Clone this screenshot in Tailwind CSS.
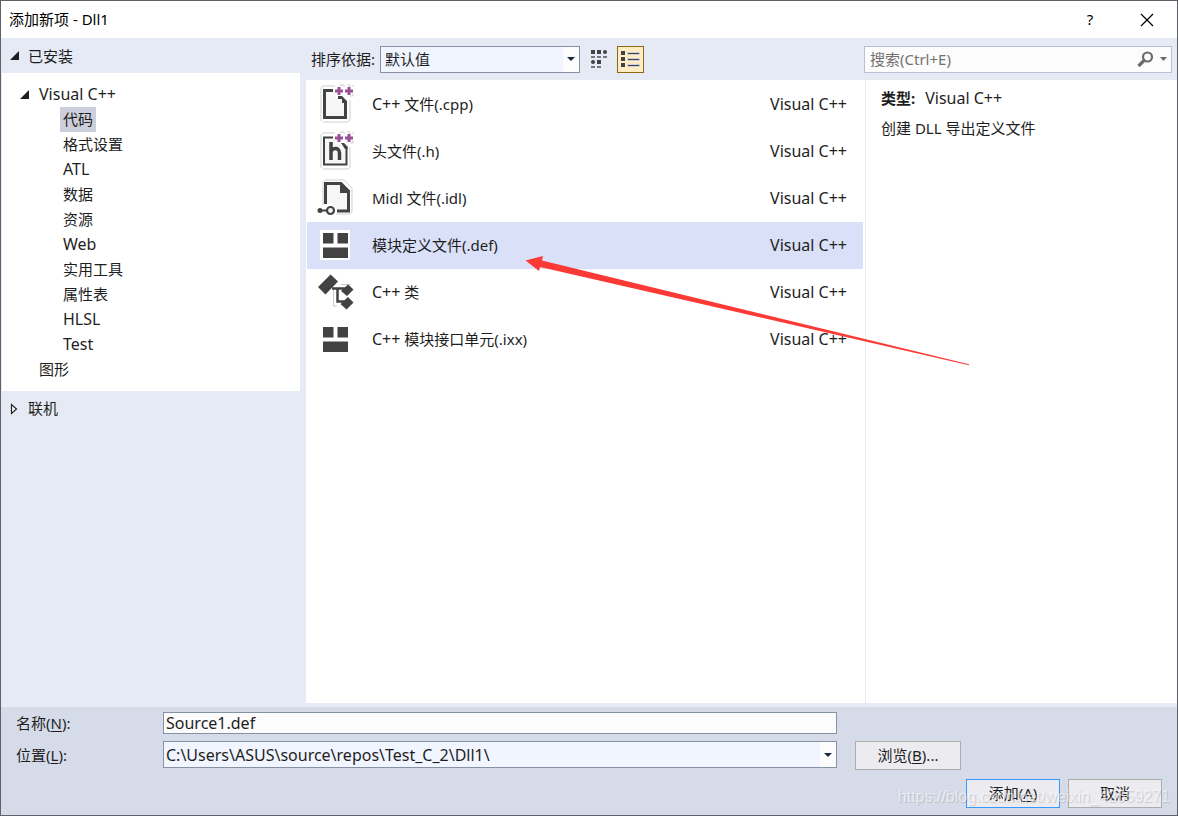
<!DOCTYPE html>
<html lang="zh-CN">
<head>
<meta charset="utf-8">
<title>添加新项 - Dll1</title>
<script src="https://cdn.jsdelivr.net/npm/@tailwindcss/browser@4"></script>
</head>
<body class="relative flex h-screen flex-col overflow-hidden border border-[#5f6068] bg-[#e6eaf5] font-['Noto_Sans','Noto_Sans_CJK_SC',sans-serif] text-[15px] leading-[25px] text-[#1e1e1e]">
<svg class="hidden">
  <symbol id="pluses" viewBox="0 0 40 40">
    <path d="M6 37V4l2-2h12M8 38h25l2-2V16M25 2v-1h4v2M32 1h3v2M37 2h2M38 9v3h-3" fill="none" stroke="#cfcfcf"/>
    <path d="M20 7h8M24 3v8M30 7h8M34 3v8" stroke="#9b4f96" stroke-width="3" fill="none"/>
  </symbol>
  <symbol id="module" viewBox="0 0 40 40">
    <path d="M5 5h30v30H5z" fill="#fff"/>
    <path d="M8 8h10.500v10.500H8zM22.500 8H33v10.500H22.500zM8 22.500h25V33H8z" fill="#424242"/>
  </symbol>
</svg>

<header class="flex h-[37px] shrink-0 items-center bg-white pr-px pl-2 text-black">
  <h1 class="flex-1">添加新项 - Dll1</h1>
  <button class="w-14" aria-label="帮助">?</button>
  <button class="grid h-full w-[58px] place-items-center" aria-label="关闭"><svg width="14" height="14" viewBox="0 0 14 14"><path d="M1 1l12 12M13 1L1 13" stroke="#000" stroke-width="1.200"/></svg></button>
</header>

<main class="flex min-h-0 flex-1">
  <nav class="flex w-[299px] shrink-0 flex-col">
    <button class="flex h-[35px] shrink-0 items-center gap-2 pt-px pl-[9px]"><svg width="10" height="10"><path d="M9 0v9H0z" fill="#1e1e1e"/></svg>已安装</button>
    <ul class="ml-px bg-white pt-[9px] pb-[9px]">
      <li><button class="flex items-center gap-[10px] pl-[18px] text-base leading-[25px]"><svg width="9" height="9"><path d="M9 0v9H0z" fill="#1e1e1e"/></svg>Visual C++</button>
        <ul class="pl-[58px]">
          <li><button class="bg-[#cccedb] px-[3px]">代码</button></li>
          <li><button class="px-[3px]">格式设置</button></li>
          <li><button class="px-[3px] text-base leading-[25px]">ATL</button></li>
          <li><button class="px-[3px]">数据</button></li>
          <li><button class="px-[3px]">资源</button></li>
          <li><button class="px-[3px] text-base leading-[25px]">Web</button></li>
          <li><button class="px-[3px]">实用工具</button></li>
          <li><button class="px-[3px]">属性表</button></li>
          <li><button class="px-[3px] text-base leading-[25px]">HLSL</button></li>
          <li><button class="px-[3px] text-base leading-[25px]">Test</button></li>
        </ul>
      </li>
      <li><button class="pl-[37px]">图形</button></li>
    </ul>
    <button class="flex h-[35px] shrink-0 items-center gap-[10px] pl-[9px]"><svg width="8" height="12"><path d="M1.500 1.500v9L6.500 6z" fill="#fff" stroke="#1e1e1e" stroke-width="1.200"/></svg>联机</button>
  </nav>

  <div class="ml-[6px] flex min-w-0 flex-1 flex-col pb-1">
    <div class="flex h-[42px] shrink-0 items-center pr-[5px] pl-[5px]">
      <label for="sort" class="w-[69px] whitespace-nowrap">排序依据:</label>
      <div class="relative h-[27px] w-[200px]">
        <select id="sort" class="h-full w-full appearance-none border border-[#8591a5] bg-[#f1f5ff] px-1"><option>默认值</option></select>
        <span class="pointer-events-none absolute inset-y-px right-px grid w-4 place-items-center bg-[#fcfcfc]"><svg width="8" height="4"><path d="M0 0h8L4 4z" fill="#1b293e"/></svg></span>
      </div>
      <button class="ml-[5px] grid size-[27px] place-items-center" aria-label="小图标"><svg width="18" height="20" viewBox="0 0 18 20"><g fill="#424242"><path d="M1 1h4v4H1zM7 1h4v4H7zM7 11h4v4H7z"/><circle cx="15" cy="3" r="2"/><circle cx="3" cy="13" r="2"/></g><path d="M1 7h4v2H1zM7 7h4v2H7zM13 7h4v2h-4zM1 17h4v2H1zM7 17h4v2H7z" fill="#77787c"/></svg></button>
      <button class="ml-[5px] grid size-[27px] place-items-center border border-[#8c6a14] bg-[#ffecc4]" aria-label="列表"><svg width="19" height="17" viewBox="0 0 19 17"><path d="M6 1h13v3H6zM6 7h13v3H6zM6 13h13v3H6z" fill="#cdd0da"/><path d="M0 0h4v4H0zM0 6h4v4H0zM0 12h4v4H0zM7 2h11v1H7zM7 8h11v1H7zM7 14h11v1H7z" fill="#424242"/></svg></button>
      <div class="ml-auto flex h-[27px] w-[308px] items-center border border-[#b9c0d6] bg-[#fcfcfc] pr-1 pl-[5px]">
        <input type="text" aria-label="搜索" placeholder="搜索(Ctrl+E)" class="min-w-0 flex-1 outline-none placeholder:text-[#717171]">
        <button aria-label="开始搜索"><svg width="17" height="17" viewBox="0 0 17 17" fill="none" stroke="#6a6a6a"><circle cx="10.500" cy="6" r="4.500" stroke-width="2.200"/><path d="M7 9.500L1.500 15" stroke-width="3.200"/></svg></button>
        <button class="ml-[6px]" aria-label="搜索选项"><svg width="7" height="4"><path d="M0 0h7L3.500 4z" fill="#6a6a6a"/></svg></button>
      </div>
    </div>
    <div class="flex min-h-0 flex-1 bg-white">
      <ul class="min-w-0 flex-1 border-r border-[#e6eaf5] pt-px pr-[2px] pl-px">
        <li class="flex h-[47px] items-center pr-4 pl-2"><svg class="mr-[17px] mb-px" width="40" height="40" viewBox="0 0 40 40"><path d="M9 6h11v7h5l6 5v16H9z" fill="#f6f6f6"/><path d="M18 6.500H9.500v27h21V17.500" fill="none" stroke="#424242" stroke-width="3"/><path d="M23 12h4l5 5v2h-5v-4h-4z" fill="#424242"/><use href="#pluses" width="40" height="40"/></svg><span class="flex-1"><span class="text-base leading-[25px]">C++</span> 文件(.cpp)</span><span class="text-base leading-[25px]">Visual C++</span></li>
        <li class="flex h-[47px] items-center pr-4 pl-2"><svg class="mr-[17px] mb-px" width="40" height="40" viewBox="0 0 40 40"><path d="M9 6h11v7h5l6 5v16H9z" fill="#f6f6f6"/><path d="M18 6.500H9v27h22.500V16" fill="none" stroke="#424242" stroke-width="2"/><path d="M26 12h3l3.500 3.500V18H30z" fill="#424242"/><path d="M16 11v18M16 22c0-5.500 8.500-6.500 8.500 0v7" fill="none" stroke="#424242" stroke-width="3.500"/><use href="#pluses" width="40" height="40"/></svg><span class="flex-1">头文件(.h)</span><span class="text-base leading-[25px]">Visual C++</span></li>
        <li class="flex h-[47px] items-center pr-4 pl-2"><svg class="mr-[17px] mb-px" width="40" height="40" viewBox="0 0 40 40"><path d="M8 27V4l2-2h19l8 8v24l-2 2H21" fill="none" stroke="#cfcfcf"/><path d="M11 5h15l7 7v21H22l-5-7h-6z" fill="#f6f6f6"/><path d="M10.500 26V5.500h15.500l7.500 7.500v20H22" fill="none" stroke="#424242" stroke-width="3"/><path d="M25 4l9 9v2h-9z" fill="#424242"/><path d="M4 32.500h8" stroke="#424242" stroke-width="2"/><circle cx="5" cy="32.500" r="2.500" fill="#424242"/><circle cx="15.500" cy="32.500" r="3.500" fill="#f6f6f6" stroke="#424242" stroke-width="2.200"/></svg><span class="flex-1">Midl 文件(.idl)</span><span class="text-base leading-[25px]">Visual C++</span></li>
        <li class="flex h-[47px] items-center bg-[#dae0f8] pr-4 pl-2"><svg class="mr-[17px] mb-px" width="40" height="40"><use href="#module"/></svg><span class="flex-1">模块定义文件(.def)</span><span class="text-base leading-[25px]">Visual C++</span></li>
        <li class="flex h-[47px] items-center pr-4 pl-2"><svg class="mr-[17px] mb-px" width="40" height="40" viewBox="0 0 40 40"><path d="M18.500 16v18H22M26 12.500h9v3" stroke="#c9c9c9" fill="none"/><path d="M17 16.500h13M22.500 16v13.500H31" stroke="#424242" stroke-width="2.500" fill="none"/><path d="M15.500 2.500l7.500 7-12.500 13-7.500-7.500zM33 12.500l5.500 5-6.500 6.500-6-5zM33 25l5.500 5.500-7 7-6-5.500z" fill="#424242"/></svg><span class="flex-1"><span class="text-base leading-[25px]">C++</span> 类</span><span class="text-base leading-[25px]">Visual C++</span></li>
        <li class="flex h-[47px] items-center pr-4 pl-2"><svg class="mr-[17px] mb-px" width="40" height="40"><use href="#module"/></svg><span class="flex-1"><span class="text-base leading-[25px]">C++</span> 模块接口单元(.ixx)</span><span class="text-base leading-[25px]">Visual C++</span></li>
      </ul>
      <section class="w-[311px] shrink-0 pt-[6px] pl-[15px]">
        <p class="flex gap-[10px]"><b>类型:</b><span class="text-base leading-[25px]">Visual C++</span></p>
        <p class="mt-[5px]">创建 DLL 导出定义文件</p>
      </section>
    </div>
  </div>
</main>

<footer class="shrink-0 bg-[#d6dbe9] pt-1 pb-[7px]">
  <div class="flex items-center pl-[15px]">
    <label for="name" class="w-[147px] leading-6">名称(<u class="underline-offset-2">N</u>):</label>
    <input id="name" type="text" value="Source1.def" class="mr-[340px] h-[22px] min-w-0 flex-1 border border-[#8591a5] bg-[#fcfcfc] px-[2px] text-base leading-5 outline-none">
  </div>
  <div class="mt-[6px] flex items-start pl-[15px]">
    <label for="location" class="w-[147px] leading-7">位置(<u class="underline-offset-2">L</u>):</label>
    <div class="relative h-[27px] min-w-0 flex-1">
      <input id="location" type="text" value="C:\Users\ASUS\source\repos\Test_C_2\Dll1\" class="h-full w-full border border-[#8591a5] bg-[#f1f5ff] px-[2px] text-base leading-6 outline-none">
      <button aria-label="展开" class="absolute inset-y-px right-px grid w-4 place-items-center bg-[#fcfcfc]"><svg width="8" height="4"><path d="M0 0h8L4 4z" fill="#1b293e"/></svg></button>
    </div>
    <button class="mr-[216px] ml-[18px] h-[29px] w-[106px] border border-[#acacac] bg-[#ecebf0]">浏览(<u class="underline-offset-2">B</u>)...</button>
  </div>
  <div class="mt-[9px] flex justify-end gap-2 pr-[15px]">
    <button class="h-[29px] w-[94px] border border-[#3399ff] bg-[#ecebf0]">添加(<u class="underline-offset-2">A</u>)</button>
    <button class="h-[29px] w-[94px] border border-[#acacac] bg-[#ecebf0]">取消</button>
  </div>
</footer>

<svg class="pointer-events-none absolute top-[254px] left-[524px]" width="446" height="114" viewBox="525 255 446 114"><path d="M525.500 260.500L543 256l-1 4.500L969 364.300v.9L540 267l-1 4z" fill="#fb3a36"/></svg>
<p class="pointer-events-none absolute right-[7px] bottom-[6px] font-['Liberation_Sans',sans-serif] text-base leading-6 text-white/60 [text-shadow:1px_1px_1px_rgb(0_0_0/0.15)]">https://blog.csdn.net/weixin_42659271</p>
</body>
</html>
